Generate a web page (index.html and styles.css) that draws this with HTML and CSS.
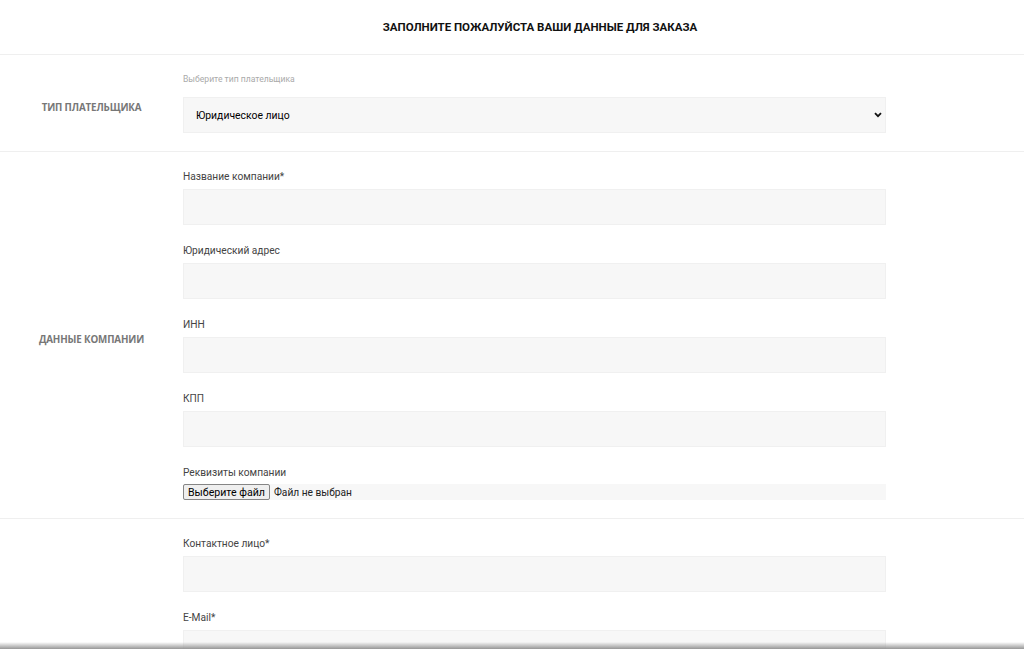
FILE: index.html
```html
<!DOCTYPE html>
<html lang="ru">
<head>
<meta charset="utf-8">
<title>Заказ</title>
<link rel="stylesheet" href="styles.css">
</head>
<body>
<header class="page-head">
  <h1 class="page-title">Заполните пожалуйста ваши данные для заказа</h1>
</header>

<section class="group">
  <div class="group-label">Тип плательщика</div>
  <div class="group-body">
    <div class="hint">Выберите тип плательщика</div>
    <div class="select-wrap">
      <select class="field select">
        <option>Юридическое лицо</option>
        <option>Физическое лицо</option>
      </select>
      <svg class="chevron" width="8" height="6" viewBox="0 0 8 6" aria-hidden="true">
        <path d="M1 1.2 L4 4.2 L7 1.2" fill="none" stroke="#111" stroke-width="1.8"/>
      </svg>
    </div>
  </div>
</section>

<section class="group">
  <div class="group-label">Данные компании</div>
  <div class="group-body">
    <div class="row">
      <label class="label">Название компании*</label>
      <input class="field" type="text">
    </div>
    <div class="row">
      <label class="label">Юридический адрес</label>
      <input class="field" type="text">
    </div>
    <div class="row">
      <label class="label">ИНН</label>
      <input class="field" type="text">
    </div>
    <div class="row">
      <label class="label">КПП</label>
      <input class="field" type="text">
    </div>
    <div class="row">
      <span class="label label-file">Реквизиты компании</span>
      <label class="file">
        <input class="file-input" type="file">
        <span class="file-btn">Выберите файл</span>
        <span class="file-name">Файл не выбран</span>
      </label>
    </div>
  </div>
</section>

<section class="group">
  <div class="group-label"></div>
  <div class="group-body">
    <div class="row">
      <label class="label">Контактное лицо*</label>
      <input class="field" type="text">
    </div>
    <div class="row">
      <label class="label">E-Mail*</label>
      <input class="field" type="text">
    </div>
  </div>
</section>

<div class="bottom-shade"></div>
</body>
</html>
```

FILE: styles.css
```css
html, body {
  margin: 0;
  padding: 0;
  background: #fff;
  font-family: Roboto, "Liberation Sans", sans-serif;
}

.page-head {
  height: 54px;
  border-bottom: 1px solid #efefef;
  display: flex;
  align-items: center;
  justify-content: center;
}

.page-title {
  margin: 0;
  font-family: Roboto, sans-serif;
  font-weight: 700;
  font-size: 11.5px;
  text-transform: uppercase;
  color: #111;
  padding-left: 56px;
}

.group {
  display: grid;
  grid-template-columns: 183px 703px;
  border-bottom: 1px solid #efefef;
}

.group-label {
  display: flex;
  align-items: center;
  justify-content: center;
  padding-top: 8px;
  font-family: "Open Sans", sans-serif;
  font-weight: 700;
  font-size: 9.8px;
  letter-spacing: -0.15px;
  color: #777;
  text-transform: uppercase;
}

.group-body {
  padding: 17px 0 18px;
  display: flex;
  flex-direction: column;
}

.hint {
  font-size: 8.6px;
  line-height: 14px;
  color: #aaa;
  margin-bottom: 11px;
}

.row {
  display: flex;
  flex-direction: column;
  margin-bottom: 18px;
}

.row:last-child {
  margin-bottom: 0;
}

.label {
  font-size: 10.2px;
  line-height: 15px;
  color: #444;
  margin-bottom: 5px;
}

.label-file {
  margin-bottom: 4px;
}

.field {
  box-sizing: border-box;
  height: 36px;
  width: 100%;
  margin: 0;
  border: 1px solid #f0f0f0;
  background: #f7f7f7;
  font-family: Roboto, sans-serif;
  font-size: 11px;
  color: #000;
  outline: none;
}

.select-wrap {
  position: relative;
}

.select {
  appearance: none;
  -webkit-appearance: none;
  padding: 0 20px 0 12px;
  font-size: 10.4px;
}

.chevron {
  position: absolute;
  right: 4px;
  top: 15px;
  pointer-events: none;
}

.file {
  display: flex;
  align-items: center;
  height: 16px;
  background: #f7f7f7;
  color: #333;
}

.file-input {
  display: none;
}

.file-btn {
  box-sizing: border-box;
  height: 16px;
  width: 87px;
  display: flex;
  align-items: center;
  justify-content: center;
  border: 1px solid #858585;
  border-radius: 2px;
  background: #efefef;
  font-size: 10.6px;
  color: #000;
  margin-right: 4px;
}

.file-name {
  font-size: 10.2px;
  color: #222;
}

.bottom-shade {
  position: fixed;
  left: 0;
  right: 0;
  bottom: 0;
  height: 7px;
  background: linear-gradient(to bottom, rgba(150,150,150,0), rgba(140,140,140,0.9));
  pointer-events: none;
}
```
